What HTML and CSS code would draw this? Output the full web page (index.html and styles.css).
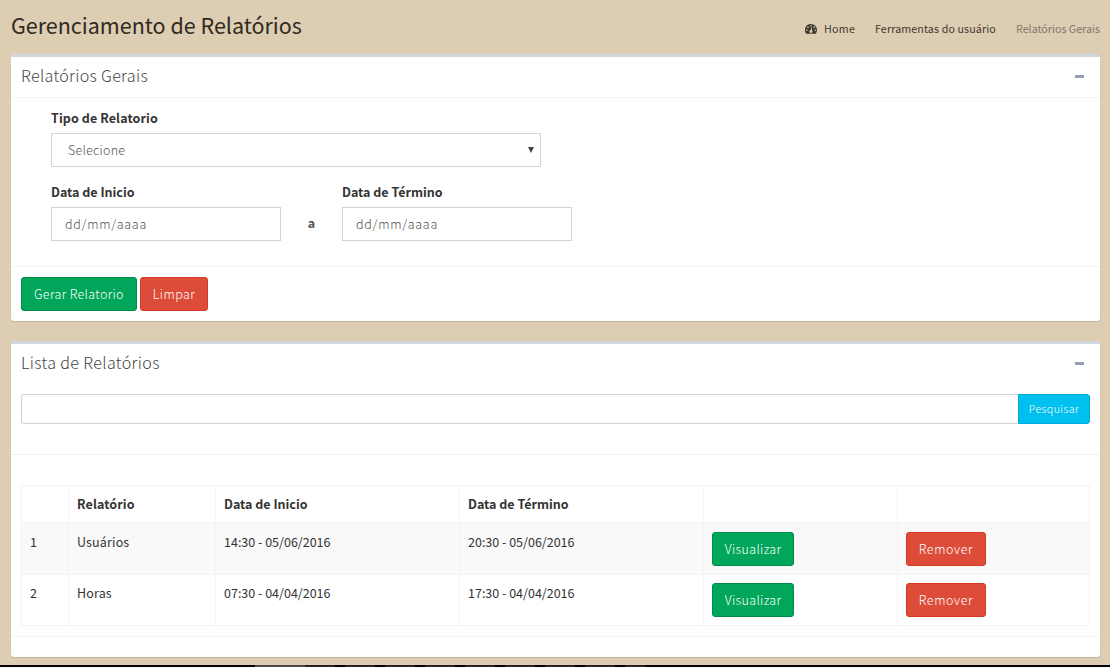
FILE: index.html
```html
<!DOCTYPE html>
<html lang="pt-BR">
<head>
<meta charset="utf-8">
<title>Gerenciamento de Relatórios</title>
<link rel="stylesheet" href="styles.css">
</head>
<body>
<main class="content">
  <header class="content-header">
    <h1 class="page-title">Gerenciamento de Relatórios</h1>
    <nav class="breadcrumb">
      <a class="crumb crumb-home"><svg class="dash-icon" viewBox="0 0 12 10"><path fill="currentColor" fill-rule="evenodd" d="M6 0a6 6 0 0 1 6 6c0 1.300-.4 2.500-1 3.500q-.2.300-.5.300h-9q-.3 0-.5-.3A6 6 0 0 1 6 0ZM5.300 1.200v1.400h1.400V1.200ZM2.300 2.500v1.400h1.400V2.500ZM8.500 2.500v1.400h1.400V2.500ZM1 5.400v1.400h1.400V5.400ZM9.700 5.400v1.400h1.400V5.400ZM6.300 3.400 5.700 6a1.500 1.500 0 1 0 1 .2l.5-2.600Z"/></svg><span class="t-home">Home</span></a>
      <a class="crumb crumb-tools">Ferramentas do usuário</a>
      <span class="crumb crumb-active">Relatórios Gerais</span>
    </nav>
  </header>

  <section class="box box-form">
    <div class="box-header bordered"><h2 class="box-title title-form">Relatórios Gerais</h2><span class="collapse"></span></div>
    <div class="form-body">
      <label class="label label-type">Tipo de Relatorio</label>
      <div class="control select"><span class="t-select">Selecione</span><svg class="arrow" viewBox="0 0 6 6"><path fill="#444" d="M0 0h6L3 6Z"/></svg></div>
      <div class="dates">
        <div class="field"><label class="label label-start">Data de Inicio</label><div class="control date">dd/mm/aaaa</div></div>
        <b class="until">a</b>
        <div class="field"><label class="label label-end">Data de Término</label><div class="control date">dd/mm/aaaa</div></div>
      </div>
    </div>
    <div class="form-footer"><button class="btn green btn-make">Gerar Relatorio</button><button class="btn red btn-clear">Limpar</button></div>
  </section>

  <section class="box box-list">
    <div class="box-header"><h2 class="box-title title-list">Lista de Relatórios</h2><span class="collapse"></span></div>
    <div class="search"><input class="search-input" type="text" aria-label="Pesquisar"><button class="search-btn">Pesquisar</button></div>
    <div class="table-wrap">
      <table class="table">
        <colgroup><col class="c1"><col class="c2"><col class="c3"><col class="c3"><col class="c4"><col class="c5"></colgroup>
        <tr class="head"><th></th><th><span class="h-rel">Relatório</span></th><th><span class="label-start">Data de Inicio</span></th><th><span class="label-end">Data de Término</span></th><th></th><th></th></tr>
        <tr class="odd"><td>1</td><td><span class="t-users">Usuários</span></td><td>14:30 - 05/06/2016</td><td>20:30 - 05/06/2016</td><td><button class="btn green btn-view">Visualizar</button></td><td><button class="btn red btn-remove">Remover</button></td></tr>
        <tr class="even"><td>2</td><td><span class="t-hours">Horas</span></td><td>07:30 - 04/04/2016</td><td>17:30 - 04/04/2016</td><td><button class="btn green btn-view">Visualizar</button></td><td><button class="btn red btn-remove">Remover</button></td></tr>
      </table>
    </div>
    <div class="list-footer"></div>
  </section>
</main>
<footer class="bottom-strip"><div class="strip-pattern"></div></footer>
</body>
</html>
```
FILE: styles.css
```css
* { box-sizing: border-box; }
body { margin: 0; height: 667px; overflow: hidden; display: flex; flex-direction: column; background: #dccdb3; color: #333; font: 12.5px/20px "Noto Sans CJK SC", sans-serif; }
.content { height: 665px; padding: 0 10px 0 11px; }
.content-header { height: 54px; display: flex; justify-content: space-between; }
.page-title { margin: 11px 0 0; font-size: 21.5px; line-height: 27px; font-weight: 400; color: #302a20; white-space: nowrap; }
.breadcrumb { display: flex; align-items: flex-start; padding-top: 19px; font-size: 10.7px; line-height: 20px; color: #40392f; white-space: nowrap; }
.crumb-home { display: flex; align-items: center; width: 70px; height: 20px; letter-spacing: .3px; }
.dash-icon { width: 12px; height: 10px; margin-right: 7px; }
.crumb-tools { width: 141px; letter-spacing: .12px; }
.crumb-active { width: 84px; color: #80776a; }
.box { background: #fff; border-top: 3px solid #d2d6de; border-radius: 3px; box-shadow: 0 1px 1px rgba(0,0,0,.12); margin-bottom: 20px; }
.box-form { height: 267px; }
.box-list { height: 316px; margin-bottom: 0; }
.box-header { height: 40px; padding: 0 16px 2px 10px; display: flex; justify-content: space-between; align-items: center; }
.bordered { height: 41px; border-bottom: 1px solid #f4f4f4; }
.box-title { margin: 0; padding-bottom: 3px; font-size: 16.1px; line-height: 20px; font-weight: 300; color: #444; white-space: nowrap; }
.title-form { letter-spacing: .32px; }
.title-list { letter-spacing: .36px; }
.collapse { width: 9px; height: 3px; background: #97a0b3; }
.form-body { height: 168px; padding: 10px 40px 0; }
.label { display: block; height: 20px; margin-bottom: 5px; font-weight: 700; white-space: nowrap; }
.label-type { letter-spacing: .1px; }
.control { height: 34px; border: 1px solid #d2d3d6; display: flex; align-items: center; color: #555; font-weight: 300; white-space: nowrap; }
.select { width: 490px; padding: 0 6px 0 16px; justify-content: space-between; margin-bottom: 15px; letter-spacing: .25px; }
.arrow { width: 6px; height: 6px; }
.dates { display: flex; }
.field { width: 230px; }
.date { padding-left: 13px; letter-spacing: .74px; }
.until { width: 61px; padding-top: 31px; text-align: center; color: #555; }
.form-footer { height: 55px; border-top: 1px solid #f4f4f4; padding: 10px; display: flex; gap: 3px; }
.btn { height: 34px; padding: 0; border: 1px solid; border-radius: 3px; color: #fff; font: 300 12.5px/20px "Noto Sans CJK SC", sans-serif; white-space: nowrap; display: block; }
.green { background: #00a65a; border-color: #008d4c; }
.red { background: #dd4b39; border-color: #d73925; }
.btn-make { width: 116px; letter-spacing: .36px; }
.btn-clear { width: 68px; letter-spacing: .45px; }
.btn-view { width: 82px; letter-spacing: .35px; }
.btn-remove { width: 80px; letter-spacing: .6px; }
.search { height: 71px; padding: 10px 10px 0; display: flex; border-bottom: 1px solid #f0f0f0; }
.search-input { width: 997px; height: 30px; border: 1px solid #d2d3d6; border-right: 0; border-radius: 3px 0 0 3px; padding: 0 10px; outline: 0; }
.search-btn { width: 72px; height: 30px; padding: 0; border: 1px solid #00acd6; border-radius: 0 3px 3px 0; background: #00c0ef; color: #fff; font: 300 10.7px/18px "Noto Sans CJK SC", sans-serif; letter-spacing: .38px; }
.table-wrap { height: 181px; padding: 30px 10px 0; }
.table { width: 1069px; border-collapse: collapse; table-layout: fixed; }
.c1 { width: 47px; } .c2 { width: 147px; } .c3 { width: 244px; } .c4 { width: 194px; } .c5 { width: 192px; }
.table th, .table td { border: 1px solid #f4f4f4; padding: 9px 8px 0; text-align: left; vertical-align: top; white-space: nowrap; }
.table th { padding-top: 8px; }
.head { height: 37px; }
.h-rel { letter-spacing: .12px; }
.t-users, .t-hours { letter-spacing: .15px; }
.odd { height: 52px; background: #f9f9f9; }
.even { height: 51px; }
.table .even td { padding-top: 8px; }
.list-footer { height: 21px; border-top: 1px solid #f4f4f4; }
.bottom-strip { height: 2px; background: #000; }
.strip-pattern { width: 390px; height: 2px; margin-left: 255px; background: linear-gradient(90deg, #4a4a44 0 50px, transparent 50px), repeating-linear-gradient(90deg, #000 0 10px, #24241f 10px 40px); }
```
